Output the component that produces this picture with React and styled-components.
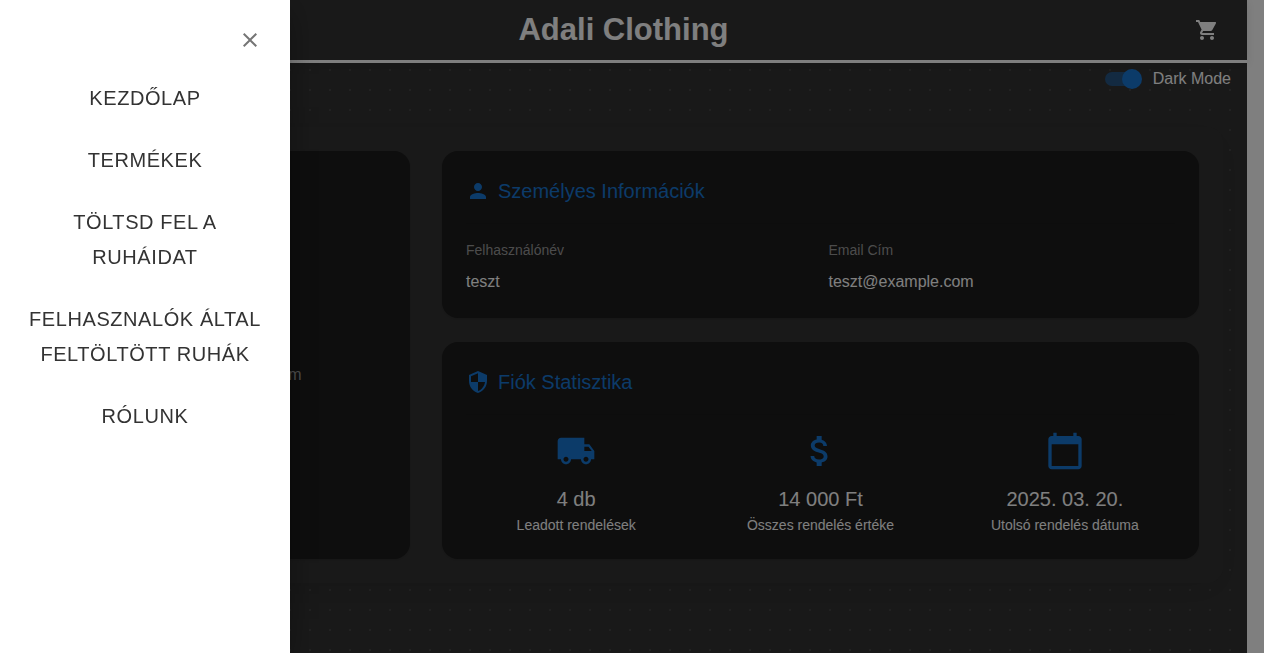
import React, { useState } from "react";
import styled, { createGlobalStyle } from "styled-components";
import {
  MdClose,
  MdShoppingCart,
  MdPerson,
  MdSecurity,
  MdLocalShipping,
  MdAttachMoney,
  MdCalendarToday,
} from "react-icons/md";

const GlobalStyle = createGlobalStyle`
  *, *::before, *::after { box-sizing: border-box; }
  body {
    margin: 0;
    background: #fff;
    font-family: "Liberation Sans", Arial, sans-serif;
    font-size: 16px;
    line-height: 24px;
  }
  h1, h2, p, dl, dd, ul { margin: 0; padding: 0; }
`;

const Shell = styled.div`
  min-height: 100vh;
  margin-right: 17px;
  padding-bottom: 64px;
  background-color: #333;
  background-image: radial-gradient(#444 1px, transparent 1px);
  background-size: 20px 20px;
  color: #fff;
`;

const Header = styled.header`
  display: grid;
  grid-template-columns: 1fr auto 1fr;
  align-items: center;
  height: 63px;
  padding: 0 20px;
  background: #333;
  border-bottom: 3px solid #fff;
  box-shadow: 0 2px 10px rgba(0, 0, 0, 0.1);
`;

const Brand = styled.h1`
  grid-column: 2;
  font-size: 31px;
  line-height: 36px;
  font-weight: 700;
`;

const IconButton = styled.button`
  display: flex;
  justify-self: end;
  padding: 8px;
  border: 0;
  border-radius: 50%;
  background: none;
  color: ${(p) => p.$color};
  font-size: 24px;
  cursor: pointer;
`;

const ThemeRow = styled.div`
  display: flex;
  justify-content: flex-end;
  align-items: center;
  height: 32px;
  padding-right: 16px;
`;

const SwitchLabel = styled.label`
  display: flex;
  align-items: center;
  gap: 14px;
  cursor: pointer;
`;

const Switch = styled.input`
  appearance: none;
  position: relative;
  width: 34px;
  height: 14px;
  margin: 0;
  border-radius: 7px;
  background: rgba(25, 118, 210, 0.5);
  cursor: pointer;

  &::before {
    content: "";
    position: absolute;
    top: -3px;
    left: -3px;
    width: 20px;
    height: 20px;
    border-radius: 50%;
    background: #fff;
  }

  &:checked::before {
    left: 17px;
    background: #1976d2;
  }
`;

const Panel = styled.main`
  display: grid;
  grid-template-columns: minmax(0, 362fr) minmax(0, 757fr);
  gap: 32px;
  margin: 32px 24px 0;
  padding: 24px;
  border-radius: 16px;
  background: #333;
  box-shadow: 0 8px 32px rgba(0, 0, 0, 0.1);
`;

const Card = styled.section`
  padding: 24px;
  border-radius: 16px;
  background: #1c1c1c;
  box-shadow: 0 1px 3px rgba(0, 0, 0, 0.12);
`;

const ProfileCard = styled(Card)`
  display: flex;
  flex-direction: column;
  align-items: center;
  gap: 56px;
  padding-top: 36px;
`;

const Avatar = styled.div`
  display: flex;
  align-items: center;
  justify-content: center;
  width: 120px;
  height: 120px;
  border-radius: 50%;
  background: #1976d2;
  font-size: 80px;
`;

const ProfileEmail = styled.p`
  color: #999;
`;

const Details = styled.div`
  display: flex;
  flex-direction: column;
  gap: 24px;
`;

const CardTitle = styled.h2`
  display: flex;
  align-items: center;
  gap: 8px;
  margin-bottom: 16px;
  padding-bottom: 16px;
  border-bottom: 1px solid #1a1a1a;
  color: #1976d2;
  font-size: 20px;
  line-height: 32px;
  font-weight: 400;

  svg {
    font-size: 24px;
  }
`;

const Fields = styled.dl`
  display: grid;
  grid-template-columns: 1fr 1fr;
  gap: 16px;
`;

const FieldName = styled.dt`
  margin-bottom: 10px;
  color: #999;
  font-size: 14px;
  line-height: 20px;
`;

const Stats = styled.div`
  display: grid;
  grid-template-columns: repeat(3, 1fr);
  gap: 24px;
`;

const Stat = styled.div`
  display: flex;
  flex-direction: column;
  align-items: center;

  svg {
    margin-bottom: 12px;
    color: #1976d2;
    font-size: 40px;
  }
`;

const StatValue = styled.p`
  font-size: 20px;
  line-height: 32px;
`;

const StatLabel = styled.p`
  font-size: 14px;
  line-height: 20px;
`;

const Backdrop = styled.div`
  position: fixed;
  inset: 0;
  background: rgba(0, 0, 0, 0.5);
`;

const Drawer = styled.aside`
  position: fixed;
  top: 0;
  bottom: 0;
  left: 0;
  display: flex;
  flex-direction: column;
  width: 290px;
  padding: 20px;
  background: #fff;
  box-shadow: 0 8px 10px -5px rgba(0, 0, 0, 0.2),
    0 16px 24px 2px rgba(0, 0, 0, 0.14), 0 6px 30px 5px rgba(0, 0, 0, 0.12);
`;

const DrawerTop = styled.div`
  display: flex;
  justify-content: flex-end;
`;

const Nav = styled.nav`
  display: flex;
  flex-direction: column;
  gap: 15px;
  margin-top: 15px;
`;

const NavLink = styled.a`
  padding: 6px 8px;
  color: #333;
  font-size: 20px;
  line-height: 35px;
  letter-spacing: 0.02857em;
  text-align: center;
  text-decoration: none;
  text-transform: uppercase;
`;

const links = [
  "Kezdőlap",
  "Termékek",
  "Töltsd fel a ruháidat",
  "Felhasznalók által feltöltött ruhák",
  "Rólunk",
];

const fields = [
  { name: "Felhasználónév", value: "teszt" },
  { name: "Email Cím", value: "teszt@example.com" },
];

const stats = [
  { Icon: MdLocalShipping, value: "4 db", label: "Leadott rendelések" },
  { Icon: MdAttachMoney, value: "14 000 Ft", label: "Összes rendelés értéke" },
  { Icon: MdCalendarToday, value: "2025. 03. 20.", label: "Utolsó rendelés dátuma" },
];

export default function App() {
  const [dark, setDark] = useState(true);
  const [open, setOpen] = useState(true);

  return (
    <>
      <GlobalStyle />
      <Shell>
        <Header>
          <Brand>Adali Clothing</Brand>
          <IconButton type="button" aria-label="Kosár" $color="#fff">
            <MdShoppingCart />
          </IconButton>
        </Header>
        <ThemeRow>
          <SwitchLabel>
            <Switch
              type="checkbox"
              checked={dark}
              onChange={(e) => setDark(e.target.checked)}
            />
            Dark Mode
          </SwitchLabel>
        </ThemeRow>
        <Panel>
          <ProfileCard>
            <Avatar>
              <MdPerson />
            </Avatar>
            <ProfileEmail>teszt@example.com</ProfileEmail>
          </ProfileCard>
          <Details>
            <Card>
              <CardTitle>
                <MdPerson />
                Személyes Információk
              </CardTitle>
              <Fields>
                {fields.map((f) => (
                  <div key={f.name}>
                    <FieldName>{f.name}</FieldName>
                    <dd>{f.value}</dd>
                  </div>
                ))}
              </Fields>
            </Card>
            <Card>
              <CardTitle>
                <MdSecurity />
                Fiók Statisztika
              </CardTitle>
              <Stats>
                {stats.map(({ Icon, value, label }) => (
                  <Stat key={label}>
                    <Icon />
                    <StatValue>{value}</StatValue>
                    <StatLabel>{label}</StatLabel>
                  </Stat>
                ))}
              </Stats>
            </Card>
          </Details>
        </Panel>
      </Shell>
      {open && (
        <>
          <Backdrop onClick={() => setOpen(false)} />
          <Drawer>
            <DrawerTop>
              <IconButton
                type="button"
                aria-label="Bezárás"
                $color="#757575"
                onClick={() => setOpen(false)}
              >
                <MdClose />
              </IconButton>
            </DrawerTop>
            <Nav>
              {links.map((text) => (
                <NavLink key={text} href="#">
                  {text}
                </NavLink>
              ))}
            </Nav>
          </Drawer>
        </>
      )}
    </>
  );
}
